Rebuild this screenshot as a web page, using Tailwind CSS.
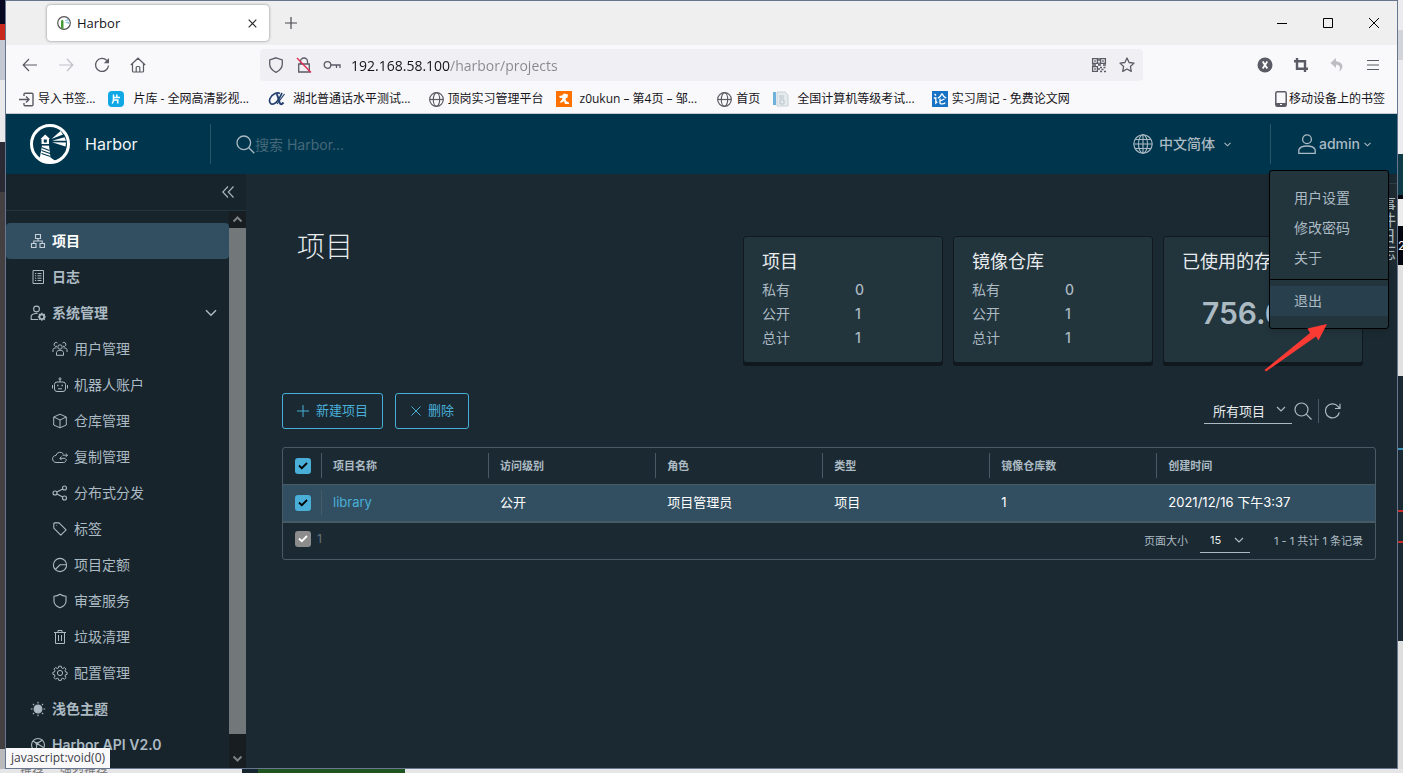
<!DOCTYPE html>
<html lang="zh-CN">
  <head>
    <meta charset="UTF-8" />
    <meta name="viewport" content="width=device-width, initial-scale=1.0" />
    <script src="https://cdn.jsdelivr.net/npm/@tailwindcss/browser@4"></script>
    <title>Harbor</title>
    <style>
      body {
        font-family: Inter, "Noto Sans CJK SC", sans-serif;
      }
      .chrome {
        font-family: "Open Sans", "Noto Sans CJK SC", sans-serif;
      }
    </style>
  </head>
  <body class="flex flex-col h-screen overflow-hidden bg-[#e6e6e9]">
    <div class="flex flex-1 min-h-0">
      <!-- what shows left of the window -->
      <div class="w-[5px] shrink-0 overflow-hidden flex flex-col text-xs text-[#555]">
        <div class="h-6 bg-[#050820]"></div>
        <div class="h-4 bg-[#c8291c]"></div>
        <div class="h-10 bg-[#c3c8d3]"></div>
        <div class="h-[62px] bg-[#e9e9ec]"></div>
        <div class="h-[50px] bg-[#2a2a35]"></div>
        <div class="flex-1 bg-[#444042]"></div>
        <div class="h-5 bg-[#b9b9bc]"></div>
      </div>

      <!-- browser window -->
      <div class="relative flex-1 min-w-0 flex flex-col border border-[#68758e] bg-[#1b2a32]">
        <div class="chrome text-[#15141a]">
          <!-- tabs -->
          <div class="flex items-center h-11 bg-[#efefef]">
            <div class="ml-[41px] w-[222px] h-9 flex items-center bg-white rounded shadow-[0_0_3px_#80808e] pl-[10px] pr-3">
              <svg class="size-[14px] shrink-0" viewBox="0 0 14 14">
                <circle cx="7" cy="7" r="6.3" fill="#fff" stroke="#555" stroke-width="1.2" />
                <path d="M4 12.500V5l1.200-1.500L6.500 5v8z" fill="#4a9a3a" />
                <path d="M7.500 5l3.500-2.500 1 2zM7.500 6l4.500-.3v2.300z" fill="#8fc1e0" />
              </svg>
              <span class="ml-[6px] flex-1 text-[13px] leading-5">Harbor</span>
              <button aria-label="关闭标签页">
                <svg class="size-[9px]" viewBox="0 0 9 9" fill="none" stroke="#222" stroke-width="1.1"><path d="M.7.7l7.600 7.600M8.300.7L.7 8.300" /></svg>
              </button>
            </div>
            <button class="ml-4" aria-label="新标签页">
              <svg class="size-3" viewBox="0 0 12 12" fill="none" stroke="#4a4953" stroke-width="1.200"><path d="M6 0v12M0 6h12" /></svg>
            </button>
            <div class="ml-auto flex">
              <button class="w-[46px] h-11 grid place-items-center" aria-label="最小化">
                <svg class="size-[10px]" viewBox="0 0 10 10" stroke="#000"><path d="M0 5.500h10" /></svg>
              </button>
              <button class="w-[46px] h-11 grid place-items-center" aria-label="最大化">
                <svg class="size-[10px]" viewBox="0 0 10 10" fill="none" stroke="#000"><path d="M.5.5h9v9h-9z" /></svg>
              </button>
              <button class="w-[46px] h-11 grid place-items-center" aria-label="关闭">
                <svg class="size-[10px]" viewBox="0 0 10 10" fill="none" stroke="#000"><path d="M0 0l10 10M10 0L0 10" /></svg>
              </button>
            </div>
          </div>

          <!-- address bar -->
          <div class="flex items-center h-10 bg-[#f9f9fb] text-[#5b5b66]">
            <div class="flex w-[254px] pl-[6px]">
              <button class="w-9 grid place-items-center" aria-label="后退">
                <svg class="size-4" viewBox="0 0 16 16" fill="none" stroke="currentColor" stroke-width="1.200"><path d="M15 8H1.500M7 2L1.200 8 7 14" /></svg>
              </button>
              <button class="w-9 grid place-items-center text-[#bfbfc9]" aria-label="前进">
                <svg class="size-4" viewBox="0 0 16 16" fill="none" stroke="currentColor" stroke-width="1.200"><path d="M1 8h13.500M9 2l5.800 6L9 14" /></svg>
              </button>
              <button class="w-9 grid place-items-center" aria-label="刷新">
                <svg class="size-4" viewBox="0 0 16 16" fill="none" stroke="currentColor" stroke-width="1.300"><path d="M14.500 8.500A6.500 6.500 0 1 1 12.800 3.500" /><path d="M15 1v5.200h-5.200z" fill="currentColor" stroke="none" /></svg>
              </button>
              <button class="w-9 grid place-items-center" aria-label="主页">
                <svg class="size-4" viewBox="0 0 16 16" fill="none" stroke="currentColor" stroke-width="1.200"><path d="M.8 8L8 1.200 15.200 8M2.500 6.800V14a1 1 0 0 0 1 1h9a1 1 0 0 0 1-1V6.800M6.200 15v-4.500a1 1 0 0 1 1-1h1.600a1 1 0 0 1 1 1V15" /></svg>
              </button>
            </div>
            <div class="flex-1 flex items-center h-8 rounded bg-[#f0eff4] pl-2 pr-2">
              <svg class="size-4" viewBox="0 0 16 16" fill="none" stroke="currentColor" stroke-width="1.300"><path d="M8 .8L14.300 3v4c0 4-2.500 6.500-6.300 8.300C4.200 13.500 1.700 11 1.700 7V3z" /></svg>
              <svg class="size-4 ml-3" viewBox="0 0 16 16" fill="none" stroke="currentColor" stroke-width="1.300"><path d="M4.500 7V4.500a3.500 3.500 0 0 1 7 0V7M2.700 7h10.600v8H2.700z" /><path d="M1 1l14 14.500" stroke="#e22850" /></svg>
              <svg class="w-[18px] h-4 ml-[11px]" viewBox="0 0 18 16" fill="none" stroke="currentColor" stroke-width="1.300"><circle cx="4.500" cy="8" r="3.300" /><path d="M7.800 8H17v3M13.500 8v3" /></svg>
              <input
                class="ml-[10px] flex-1 h-8 text-sm outline-none bg-clip-text text-transparent caret-black bg-linear-to-r from-[#15141a] from-[99px] to-[#88878f] to-[99px]"
                type="text"
                aria-label="地址"
                value="192.168.58.100/harbor/projects"
              />
              <svg class="size-4" viewBox="0 0 16 16" fill="none" stroke="currentColor" stroke-width="1.300">
                <path d="M1.600 1.600h4.800v4.800H1.600zM9.600 1.600h4.800v4.800H9.600zM1.600 9.600h4.800v4.800H1.600z" />
                <path d="M3.200 4h1.600M11.200 4h1.600M3.200 12h1.600M8 1v3M8 5.500v3M1 8h4M7 8h3M12 8h3M9 10.500h2M12.500 10.500h2M10.500 12.500h2M9 14.500h2M13 14.500h2M8 11v2" stroke-width="1.500" />
              </svg>
              <button class="ml-3" aria-label="收藏">
                <svg class="size-4" viewBox="0 0 16 16" fill="none" stroke="currentColor" stroke-width="1.300" stroke-linejoin="round"><path d="M8 1l2.100 4.500 4.900.6-3.600 3.400.9 4.900L8 12l-4.300 2.400.9-4.900L1 6.100l4.900-.6z" /></svg>
              </button>
            </div>
            <div class="flex w-[254px] pr-[6px] justify-end">
              <button class="w-9 grid place-items-center" aria-label="扩展">
                <svg class="size-4" viewBox="0 0 16 16"><circle cx="8" cy="8" r="7.500" fill="currentColor" /><path d="M5.700 4.500l4.600 7M10.300 4.500l-4.600 7" stroke="#fff" stroke-width="1.800" /></svg>
              </button>
              <button class="w-9 grid place-items-center" aria-label="截图">
                <svg class="size-4" viewBox="0 0 16 16" fill="none" stroke="currentColor" stroke-width="2.400"><path d="M4 1v10.800h11M1 4.200h11V15" /></svg>
              </button>
              <button class="w-9 grid place-items-center text-[#bdbdc4]" aria-label="撤销">
                <svg class="size-4" viewBox="0 0 16 16" fill="currentColor"><path d="M7 1L1.500 6 7 11V7.800c3 0 4.800 1.200 3.500 6.700 3.500-2.500 5.500-9-3.500-10.300z" /></svg>
              </button>
              <button class="w-9 grid place-items-center" aria-label="菜单">
                <svg class="size-4" viewBox="0 0 16 16" stroke="currentColor" stroke-width="1.200"><path d="M2 3.500h12M2 8h12M2 12.500h12" /></svg>
              </button>
            </div>
          </div>

          <!-- bookmarks -->
          <div class="flex items-center h-[29px] bg-[#f9f9fb] text-xs whitespace-nowrap pl-[13px] pr-3 border-b border-[#c9c9cf]">
            <a href="#" class="flex items-center gap-1">
              <svg class="size-[15px]" viewBox="0 0 15 15" fill="none" stroke="#5b5b66" stroke-width="1.400"><path d="M5 4V2.200a1 1 0 0 1 1-1h7a1 1 0 0 1 1 1v10.600a1 1 0 0 1-1 1H6a1 1 0 0 1-1-1V11M0 7.500h10M7 4.500l3 3-3 3" /></svg>
              导入书签...
            </a>
            <a href="#" class="flex items-center gap-[9px] ml-[13px]">
              <svg class="size-4" viewBox="0 0 16 16" fill="none"><rect width="16" height="16" rx="4" fill="#10a8e4" /><path d="M5.500 3.500v5c0 2-.5 3-1.500 4M5.500 6.500H12M8.800 3.500v3M5.500 9h4.300v3.500" stroke="#fff" stroke-width="1.500" /></svg>
              片库 - 全网高清影视...
            </a>
            <a href="#" class="flex items-center gap-2 ml-[19px]">
              <svg class="w-[17px] h-4" viewBox="0 0 17 16" fill="none" stroke="#24406f"><path d="M12 2.500C9 1 4 3 2 7.500.5 11.500 3 14.500 6.500 12.500 10 10.500 12 6 14 2" stroke-width="1.700" /><path d="M8.500 3c1.500 1 2.500 9 4 10 .8.500 2-.3 3-1.500" stroke-width="2" /><path d="M16.500 3L9 13" stroke-width="1.200" /></svg>
              湖北普通话水平测试...
            </a>
            <a href="#" class="flex items-center gap-1 ml-[18px]">
              <svg class="size-[15px]" viewBox="0 0 15 15" fill="none" stroke="#5b5b66" stroke-width="1.200"><circle cx="7.500" cy="7.500" r="6.800" /><ellipse cx="7.500" cy="7.500" rx="3.200" ry="6.800" /><path d="M.7 7.500h13.600" /></svg>
              顶岗实习管理平台
            </a>
            <a href="#" class="flex items-center gap-2 ml-3">
              <svg class="size-4" viewBox="0 0 16 16"><path fill="#ff7100" d="M0 0h16v16H0z" /><path d="M3 5l3-.5 2-2 4 1-.5 3-2 1 .5 2.500 3 1.500v1.500H9L8 10l-2 1.500H3.500l2.500-3L6.500 7 4 7z" fill="#fff" /></svg>
              z0ukun – 第4页 – 邹...
            </a>
            <a href="#" class="flex items-center gap-1 ml-5">
              <svg class="size-[15px]" viewBox="0 0 15 15" fill="none" stroke="#5b5b66" stroke-width="1.200"><circle cx="7.500" cy="7.500" r="6.800" /><ellipse cx="7.500" cy="7.500" rx="3.200" ry="6.800" /><path d="M.7 7.500h13.600" /></svg>
              首页
            </a>
            <a href="#" class="flex items-center gap-2 ml-[13px]">
              <svg class="size-4" viewBox="0 0 16 16"><path fill="#6db1dc" d="M0 1h3v13H0z" /><path d="M4 1h8l3 3v11H4z" fill="#e4eaee" stroke="#c8d2d8" /><path d="M6 5h5M6 7h5M7 9h4v4H7z" stroke="#b9c4cb" fill="none" /></svg>
              全国计算机等级考试...
            </a>
            <a href="#" class="flex items-center gap-1 ml-[17px]">
              <svg class="size-4" viewBox="0 0 16 16" fill="none" stroke="#fff" stroke-width="1.300"><path fill="#1873c4" stroke="none" d="M0 0h16v16H0z" /><path d="M2.500 3l1.500 1.500M1.800 7h2v5l1.500-1.300M10 2.500C9 5 7.500 6.300 5.800 7.300M10 2.500c1 2.500 2.500 3.800 4.200 4.600M8 7.500v4.800c0 .8 5 1 5-.8M12.500 8L8 10" /></svg>
              实习周记 - 免费论文网
            </a>
            <a href="#" class="flex items-center gap-[2px] ml-auto">
              <svg class="w-3 h-4" viewBox="0 0 12 16" fill="none" stroke="#5b5b66" stroke-width="1.500"><rect x=".8" y=".8" width="10.400" height="14.400" rx="1.500" /><path d="M1 13.500h10" stroke-width="3" /><path d="M5 13.500h2" stroke="#fff" stroke-width="1" /></svg>
              移动设备上的书签
            </a>
          </div>
        </div>

        <!-- Harbor header -->
        <header class="flex items-center h-[60px] shrink-0 bg-[#00364d] text-sm text-[#acbac3]">
          <a href="#" class="flex items-center pl-6 w-[204px]">
            <svg class="size-10" viewBox="0 0 40 40">
              <circle cx="20" cy="20" r="18.500" fill="none" stroke="#fff" stroke-width="3" />
              <path d="M10.500 15l4.700-4.500L20 15h-1v5h-7.500v-5zM12 21.500h7l1.500 12 5 3.500-6 1.500-10-3z" fill="#fff" />
              <path d="M13.800 15.500h3v3h-3z" fill="#00364d" />
              <path d="M11.500 23.500l8 3M11.500 26.500l8.500 3M11.500 29.500l9 3M13 20.700h6" stroke="#00364d" stroke-width="1.100" />
              <path d="M21.500 15l9-8 2.500 3.500zM22 16.700l12.500-3.500 1.500 3.500zM22 18.300l14 .2-.5 4z" fill="#fff" />
            </svg>
            <span class="ml-[15px] text-base leading-6 text-[#f2f5f7]">Harbor</span>
          </a>
          <label class="flex items-center flex-1 h-10 border-l border-[#2a5468] pl-[25px]">
            <svg class="size-[19px]" viewBox="0 0 19 19" fill="none" stroke="currentColor" stroke-width="1.300"><circle cx="7.800" cy="7.800" r="6.800" /><path d="M12.800 12.800l5.500 5.500" /></svg>
            <input type="search" aria-label="搜索" placeholder="搜索 Harbor..." class="w-60 h-9 outline-none text-sm placeholder:text-[#45687a]" />
          </label>
          <button class="flex items-center pr-[39px]">
            <svg class="size-5" viewBox="0 0 20 20" fill="none" stroke="currentColor" stroke-width="1.100"><circle cx="10" cy="10" r="9.200" /><ellipse cx="10" cy="10" rx="4.500" ry="9.200" /><path d="M10 .8v18.400M.8 10h18.400M2.300 5.500h15.400M2.300 14.500h15.400" /></svg>
            <span class="ml-[6px] font-medium">中文简体</span>
            <svg class="ml-[9px] w-[7px] h-[5px]" viewBox="0 0 7 5" fill="none" stroke="currentColor" stroke-width="1.100"><path d="M.5.8l3 3 3-3" /></svg>
          </button>
          <div class="relative flex items-center h-10 w-[127px] border-l border-[#2a5468]">
            <button class="flex items-center ml-[27px] font-medium">
              <svg class="w-[18px] h-5" viewBox="0 0 18 20" fill="none" stroke="currentColor" stroke-width="1.300"><circle cx="9" cy="5.200" r="4.400" /><path d="M.8 19.300v-3.500c1-2.500 4.500-3.800 8.200-3.800s7.200 1.300 8.200 3.800v3.500z" /></svg>
              <span class="ml-[3px]">admin</span>
              <svg class="ml-1 w-[7px] h-[5px]" viewBox="0 0 7 5" fill="none" stroke="currentColor" stroke-width="1.100"><path d="M.5.8l3 3 3-3" /></svg>
            </button>
            <!-- user menu -->
            <div class="absolute z-20 right-2 top-[46px] w-[120px] flex flex-col bg-[#22343c] border border-black rounded-[3px] py-3 shadow-md">
              <button class="h-[30px] pl-6 text-left">用户设置</button>
              <button class="h-[30px] pl-6 text-left">修改密码</button>
              <button class="h-[30px] pl-6 text-left">关于</button>
              <div class="my-[6px] border-t border-black"></div>
              <button class="h-[30px] pl-6 text-left bg-[#28404d]">退出</button>
            </div>
            <svg class="absolute z-30 right-[69px] top-[200px] w-[64px] h-[48px]" viewBox="0 0 64 48" fill="#fb3a34"><path d="M.5 46L46 9l-2.500-4.500L63 0l-8.500 16.500-2.500-4L2 47.500z" /></svg>
          </div>
        </header>

        <div class="flex flex-1 min-h-0">
          <!-- side navigation -->
          <nav class="w-60 shrink-0 flex flex-col bg-[#17242b] text-sm text-[#acbac3]">
            <div class="h-[37px] shrink-0 flex items-center justify-end border-b border-[#22343c] pr-3">
              <button aria-label="折叠">
                <svg class="w-3 h-3" viewBox="0 0 12 12" fill="none" stroke="currentColor" stroke-width="1.100"><path d="M6 .5L.8 6 6 11.500M11.500.5L6.300 6l5.200 5.500" /></svg>
              </button>
            </div>
            <div class="flex flex-1 min-h-0">
              <div class="flex-1 pt-3 overflow-hidden leading-9">
                <a href="#" class="flex items-center h-9 pl-6 gap-[6px] rounded bg-[#324f62] text-white font-bold">
                  <svg class="size-4" viewBox="0 0 16 16" fill="none" stroke="#c5d0d7" stroke-width="1.100"><path d="M5.500 1.500h5v4h-5zM1.500 10.500h4.500v4H1.500zM10 10.500h4.500v4H10zM8 5.500V8M3.800 10.500V8h8.400v2.500" /></svg>
                  项目
                </a>
                <a href="#" class="flex items-center h-9 pl-6 gap-[6px] font-bold">
                  <svg class="size-4" viewBox="0 0 16 16" fill="none" stroke="currentColor"><path d="M3 1.500h10.500v13H3zM5 4.500h1.200M7.500 4.500h4M5 6.800h1.200M7.500 6.800h4M5 9.200h1.200M7.500 9.200h4M5 11.500h1.200M7.500 11.500h4" /></svg>
                  日志
                </a>
                <button class="flex items-center w-full h-9 pl-6 pr-3 gap-[6px] font-bold">
                  <svg class="size-4" viewBox="0 0 16 16" fill="none" stroke="currentColor" stroke-width="1.100"><circle cx="6.500" cy="4" r="2.900" /><path d="M8 14.500H1.200v-3.700C2 9.200 4 8.500 6 8.500h1.500" /><circle cx="11.800" cy="11.800" r="2.400" stroke-width="1.800" /><path d="M11.800 7.800v1.400M11.800 14.400v1.400M7.800 11.800h1.400M14.400 11.800h1.400M9 9l1 1M13.700 13.700l1 1M9 14.600l1-1M13.700 9.900l1-1" stroke-width="1.300" /></svg>
                  系统管理
                  <svg class="ml-auto w-3 h-2" viewBox="0 0 12 8" fill="none" stroke="currentColor" stroke-width="1.500"><path d="M1 1.200l5 5 5-5" /></svg>
                </button>
                <a href="#" class="flex items-center h-9 pl-[46px] gap-[6px]">
                  <svg class="size-4" viewBox="0 0 16 16" fill="none" stroke="currentColor"><circle cx="8" cy="6" r="2.200" /><path d="M4.500 14.300v-3c.5-1.500 2-2 3.500-2s3 .5 3.500 2v3zM5 5.200A2 2 0 1 1 5.500 2M11 5.200A2 2 0 1 0 10.500 2M1 11V8.500C1.300 7.300 2.500 6.800 4.500 7M15 11V8.500c-.3-1.200-1.500-1.700-3.500-1.500" /></svg>
                  用户管理
                </a>
                <a href="#" class="flex items-center h-9 pl-[46px] gap-[6px]">
                  <svg class="size-4" viewBox="0 0 16 16" fill="none" stroke="currentColor"><rect x="2.500" y="5" width="11" height="9.500" rx="2.500" /><path d="M8 5V2.800M.5 8v3.500M15.500 8v3.500M6 11.800h4" /><circle cx="8" cy="1.800" r="1" /><path d="M5.200 8.500h1.300M9.500 8.500h1.300" stroke-width="1.400" /></svg>
                  机器人账户
                </a>
                <a href="#" class="flex items-center h-9 pl-[46px] gap-[6px]">
                  <svg class="size-4" viewBox="0 0 16 16" fill="none" stroke="currentColor"><path d="M8 1.200L14.300 4v8L8 14.800 1.700 12V4zM1.700 4L8 7l6.300-3M8 7v7.800" /></svg>
                  仓库管理
                </a>
                <a href="#" class="flex items-center h-9 pl-[46px] gap-[6px]">
                  <svg class="size-4" viewBox="0 0 16 16" fill="none" stroke="currentColor"><path d="M11.500 5A4.200 4.200 0 0 0 4 6.500C2 6.500.6 8 .6 9.800S2 13.500 4 13.500h7.500a2.800 2.800 0 0 0 2.600-3.500M8 9.300h5.500M9.500 7.500L7.800 9.300l1.700 1.800M10.500 6.200h5M13.800 4.500l1.700 1.700-1.700 1.700" /></svg>
                  复制管理
                </a>
                <a href="#" class="flex items-center h-9 pl-[46px] gap-[6px]">
                  <svg class="size-4" viewBox="0 0 16 16" fill="none" stroke="currentColor" stroke-width="1.100"><circle cx="3" cy="8" r="2" /><circle cx="12.500" cy="3" r="2" /><circle cx="12.500" cy="13" r="2" /><path d="M4.800 7l6-3.100M4.800 9l6 3.100" /></svg>
                  分布式分发
                </a>
                <a href="#" class="flex items-center h-9 pl-[46px] gap-[6px]">
                  <svg class="size-4" viewBox="0 0 16 16" fill="none" stroke="currentColor" stroke-width="1.100"><path d="M1.800 2.500v4.700l7 7 5.300-5.300-7-7H2.400zM4.300 4.500h.6" stroke-linejoin="round" /></svg>
                  标签
                </a>
                <a href="#" class="flex items-center h-9 pl-[46px] gap-[6px]">
                  <svg class="size-4" viewBox="0 0 16 16" fill="none" stroke="currentColor" stroke-width="1.100"><circle cx="8" cy="8" r="6.600" /><path d="M3.300 12.500L8 7.800h6.500" /></svg>
                  项目定额
                </a>
                <a href="#" class="flex items-center h-9 pl-[46px] gap-[6px]">
                  <svg class="size-4" viewBox="0 0 16 16" fill="none" stroke="currentColor" stroke-width="1.100"><path d="M8 1.200c1.800 1.300 3.800 1.900 6 2v5c0 3-2.500 5.200-6 6.600C4.500 13.400 2 11.200 2 8.200v-5c2.200-.1 4.200-.7 6-2z" /></svg>
                  审查服务
                </a>
                <a href="#" class="flex items-center h-9 pl-[46px] gap-[6px]">
                  <svg class="size-4" viewBox="0 0 16 16" fill="none" stroke="currentColor"><path d="M2 3.500h12M3.500 3.500v11h9v-11M6 3.500v-2h4v2M6.500 6v6M9.500 6v6" /></svg>
                  垃圾清理
                </a>
                <a href="#" class="flex items-center h-9 pl-[46px] gap-[6px]">
                  <svg class="size-4" viewBox="0 0 16 16" fill="none" stroke="currentColor"><circle cx="8" cy="8" r="2.600" /><path d="M6.800 1.200h2.400l.4 1.800 1.200.5 1.600-1 1.600 1.600-1 1.600.5 1.200 1.600.4v2l-1.600.5-.5 1.200 1 1.600-1.600 1.600-1.600-1-1.200.5-.4 1.700H6.800l-.4-1.700-1.200-.5-1.600 1L2 12.600 3 11l-.5-1.200-1.600-.5v-2l1.600-.4L3 5.700 2 4.100l1.600-1.600 1.600 1 1.200-.5z" /></svg>
                  配置管理
                </a>
                <button class="flex items-center h-9 pl-6 gap-[6px] font-bold">
                  <svg class="size-4" viewBox="0 0 16 16" fill="currentColor" stroke="currentColor" stroke-width="1.100"><circle cx="8" cy="8" r="3.900" /><path d="M8 .8v1.700M8 13.500v1.700M.8 8h1.700M13.500 8h1.700M2.900 2.900l1.200 1.200M11.900 11.900l1.200 1.200M2.900 13.100l1.200-1.200M11.900 4.100l1.200-1.200" /></svg>
                  浅色主题
                </button>
                <a href="#" class="flex items-center h-9 pl-6 gap-[6px] font-semibold">
                  <svg class="size-4" viewBox="0 0 16 16" fill="none" stroke="currentColor" stroke-width="1.100"><circle cx="8" cy="8" r="6.500" /><path d="M3 4l4 2.500L12.500 3M7 6.500L6 14M7 6.500l6.500 4" /><circle cx="7" cy="6.500" r="1" /></svg>
                  Harbor API V2.0
                </a>
              </div>
              <!-- scrollbar -->
              <div class="w-[17px] shrink-0 flex flex-col bg-[#181d22] text-[#7b8084]">
                <svg class="w-[17px] h-[17px]" viewBox="0 0 17 17" fill="none" stroke="currentColor" stroke-width="2"><path d="M4.500 10.500l4-4 4 4" /></svg>
                <div class="flex-1 bg-[#72777a]"></div>
                <svg class="w-[17px] h-[34px]" viewBox="0 0 17 34" fill="none" stroke="currentColor" stroke-width="2"><path d="M4.500 22.500l4 4 4-4" /></svg>
              </div>
            </div>
          </nav>

          <!-- content -->
          <main class="relative flex-1 min-w-0 pl-9 pr-[21px] pt-[62px] text-[#acbac3]">
            <div class="flex items-start pr-[13px] pl-[15px]">
              <h1 class="flex-1 text-[28px] leading-[22px] font-light text-[#e9ecef]">项目</h1>
              <div class="flex gap-[10px] text-sm leading-6">
                <section class="w-[200px] h-[127px] px-[18px] pt-3 rounded-[3px] border border-[#11191e] bg-[#22343c] shadow-[0_3px_0_#10181d]">
                  <h2 class="text-lg leading-[26px] pb-[3px] text-[#e9ecef]">项目</h2>
                  <dl class="grid grid-cols-[93px_1fr]">
                    <dt>私有</dt><dd class="font-medium">0</dd>
                    <dt>公开</dt><dd class="font-medium">1</dd>
                    <dt>总计</dt><dd class="font-medium">1</dd>
                  </dl>
                </section>
                <section class="w-[200px] h-[127px] px-[18px] pt-3 rounded-[3px] border border-[#11191e] bg-[#22343c] shadow-[0_3px_0_#10181d]">
                  <h2 class="text-lg leading-[26px] pb-[3px] text-[#e9ecef]">镜像仓库</h2>
                  <dl class="grid grid-cols-[93px_1fr]">
                    <dt>私有</dt><dd class="font-medium">0</dd>
                    <dt>公开</dt><dd class="font-medium">1</dd>
                    <dt>总计</dt><dd class="font-medium">1</dd>
                  </dl>
                </section>
                <section class="w-[200px] h-[127px] px-[18px] pt-3 rounded-[3px] border border-[#11191e] bg-[#22343c] shadow-[0_3px_0_#10181d]">
                  <h2 class="text-lg leading-[26px] text-[#e9ecef]">已使用的存储</h2>
                  <p class="pl-5 pt-5 text-[30px] leading-9 font-semibold">756.6</p>
                </section>
              </div>
            </div>

            <!-- event log tab, mostly behind the user menu -->
            <div class="absolute right-0 top-[9px] w-5 h-[83px] overflow-hidden border-t border-[#2e3f48] bg-[#1e2b33] pt-3 pr-[2px] text-base leading-4 [writing-mode:vertical-rl]">事件日志</div>

            <div class="flex items-center mt-[30px] h-9">
              <button class="flex items-center gap-[7px] h-9 px-[14px] rounded-[3px] border border-[#49afd9] text-[13px] text-[#49afd9]">
                <svg class="size-3" viewBox="0 0 12 12" stroke="currentColor"><path d="M6 0v12M0 6h12" /></svg>
                新建项目
              </button>
              <button class="flex items-center gap-[6px] ml-3 h-9 px-[14px] rounded-[3px] border border-[#49afd9] text-[13px] text-[#49afd9]">
                <svg class="size-3" viewBox="0 0 12 12" stroke="currentColor"><path d="M1.500 1.500l9 9M10.500 1.500l-9 9" /></svg>
                删除
              </button>
              <div class="ml-auto mr-[35px] flex items-center">
                <div class="relative">
                  <select aria-label="项目筛选" class="appearance-none w-[88px] h-6 pl-[9px] text-[13px] text-[#e9ecef] border-b border-[#acbac3] outline-none">
                    <option>所有项目</option>
                  </select>
                  <svg class="absolute right-[6px] top-2 w-[10px] h-[7px] pointer-events-none" viewBox="0 0 10 7" fill="none" stroke="currentColor" stroke-width="1.200"><path d="M1 1l4 4 4-4" /></svg>
                </div>
                <button class="ml-[2px]" aria-label="搜索项目">
                  <svg class="size-[18px]" viewBox="0 0 18 18" fill="none" stroke="currentColor" stroke-width="1.200"><circle cx="7.500" cy="7.500" r="6.500" /><path d="M12.200 12.200l5.300 5.300" /></svg>
                </button>
                <span class="ml-[6px] h-6 border-l border-[#495a67]"></span>
                <button class="ml-[6px]" aria-label="刷新列表">
                  <svg class="size-4" viewBox="0 0 16 16" fill="none" stroke="currentColor" stroke-width="1.200"><path d="M14.300 9.500A7 7 0 1 1 13 3.500l1.800 1.800M15 .8v4.700h-5" /></svg>
                </button>
              </div>
            </div>

            <div class="mt-[18px] border border-[#495a67] rounded-[3px] text-[13px]">
              <table class="w-full table-fixed text-left">
                <colgroup>
                  <col class="w-[38px]" />
                  <col class="w-[15.3%]" />
                  <col class="w-[15.3%]" />
                  <col class="w-[15.3%]" />
                  <col class="w-[15.3%]" />
                  <col class="w-[15.3%]" />
                  <col />
                </colgroup>
                <thead class="text-[11px]">
                  <tr class="h-9 border-b border-[#495a67]">
                    <th class="pl-3">
                      <label class="relative block size-4">
                        <input type="checkbox" checked aria-label="全选" class="block appearance-none size-4 rounded-[3px] bg-[#49afd9]" />
                        <svg class="absolute inset-0 size-4 pointer-events-none" viewBox="0 0 16 16" fill="none" stroke="#000" stroke-width="1.800"><path d="M4 7.500l2.800 2.700L12 5" /></svg>
                      </label>
                    </th>
                    <th><span class="flex items-center h-[25px] pl-[11px] border-l border-[#495a67]">项目名称</span></th>
                    <th><span class="flex items-center h-[25px] pl-[11px] border-l border-[#495a67]">访问级别</span></th>
                    <th><span class="flex items-center h-[25px] pl-[11px] border-l border-[#495a67]">角色</span></th>
                    <th><span class="flex items-center h-[25px] pl-[11px] border-l border-[#495a67]">类型</span></th>
                    <th><span class="flex items-center h-[25px] pl-[11px] border-l border-[#495a67]">镜像仓库数</span></th>
                    <th><span class="flex items-center h-[25px] pl-[11px] border-l border-[#495a67]">创建时间</span></th>
                  </tr>
                </thead>
                <tbody>
                  <tr class="h-[38px] bg-[#324f62] text-white border-b-2 border-[#495a67]">
                    <td class="pl-3">
                      <label class="relative block size-4">
                        <input type="checkbox" checked aria-label="选择 library" class="block appearance-none size-4 rounded-[3px] bg-[#49afd9]" />
                        <svg class="absolute inset-0 size-4 pointer-events-none" viewBox="0 0 16 16" fill="none" stroke="#000" stroke-width="1.800"><path d="M4 7.500l2.800 2.700L12 5" /></svg>
                      </label>
                    </td>
                    <td><span class="flex items-center h-[25px] pl-[11px] border-l border-[#495a67]"><a href="#" class="text-[#49afd9]">library</a></span></td>
                    <td class="pl-3">公开</td>
                    <td class="pl-3">项目管理员</td>
                    <td class="pl-3">项目</td>
                    <td class="pl-3">1</td>
                    <td class="pl-3">2021/12/16 下午3:37</td>
                  </tr>
                </tbody>
              </table>
              <div class="flex items-center h-9 pl-3 pr-3 text-[11px]">
                <label class="flex items-center gap-[6px] pb-1 text-[#66757f] text-xs">
                  <span class="relative block size-4">
                    <input type="checkbox" checked disabled class="block appearance-none size-4 rounded-[3px] bg-[#8c8c8c]" />
                    <svg class="absolute inset-0 size-4 pointer-events-none" viewBox="0 0 16 16" fill="none" stroke="#fff" stroke-width="1.800"><path d="M4 7.500l2.800 2.700L12 5" /></svg>
                  </span>
                  1
                </label>
                <label for="page-size" class="ml-auto">页面大小</label>
                <div class="relative ml-3 mr-6">
                  <select id="page-size" class="appearance-none w-[50px] h-6 pl-[10px] text-[#e9ecef] border-b border-[#acbac3] outline-none">
                    <option>15</option>
                  </select>
                  <svg class="absolute right-[6px] top-2 w-[10px] h-[7px] pointer-events-none" viewBox="0 0 10 7" fill="none" stroke="currentColor" stroke-width="1.200"><path d="M1 1l4 4 4-4" /></svg>
                </div>
                <span>1 - 1 共计 1 条记录</span>
              </div>
            </div>
          </main>
        </div>

        <!-- link status -->
        <div class="chrome absolute left-0 bottom-0 z-10 h-5 px-[5px] bg-[#f9f9fb] text-xs leading-5 text-[#3c3c46]">javascript:void(0)</div>
      </div>

      <!-- what shows right of the window -->
      <div class="w-[5px] shrink-0 overflow-hidden flex flex-col">
        <div class="h-[30px] bg-[#ececee]"></div>
        <div class="h-[30px] bg-[#d3d3da]"></div>
        <div class="h-[94px] bg-[#ececee]"></div>
        <div class="h-[41px] bg-[#0f3a48]"></div>
        <div class="h-1 bg-[#03050f]"></div>
        <div class="h-[27px] bg-[#ececec]"></div>
        <div class="h-[39px] bg-[#03050f] text-white text-xs leading-[39px]">2</div>
        <div class="h-[111px] bg-[#e0e0e0]"></div>
        <div class="h-[72px] bg-[#1b2a32]"></div>
        <div class="h-[2px] bg-[#3d92bb]"></div>
        <div class="h-[60px] bg-[#1b2a32]"></div>
        <div class="h-[2px] bg-[#c92a2a]"></div>
        <div class="h-[29px] bg-[#1b2a32]"></div>
        <div class="h-[2px] bg-[#c92a2a]"></div>
        <div class="h-[98px] bg-[#1b2a32]"></div>
        <div class="flex-1 bg-[#dedede]"></div>
      </div>
    </div>

    <!-- what shows below the window -->
    <div class="h-1 shrink-0 flex items-center overflow-hidden text-xs text-[#777]">
      <span class="ml-5">推荐</span>
      <span class="ml-4">强烈推荐</span>
      <span class="ml-[134px] w-4 h-1 bg-[#17252e]"></span>
      <span class="w-[147px] h-1 bg-[#1f5420]"></span>
    </div>
  </body>
</html>
